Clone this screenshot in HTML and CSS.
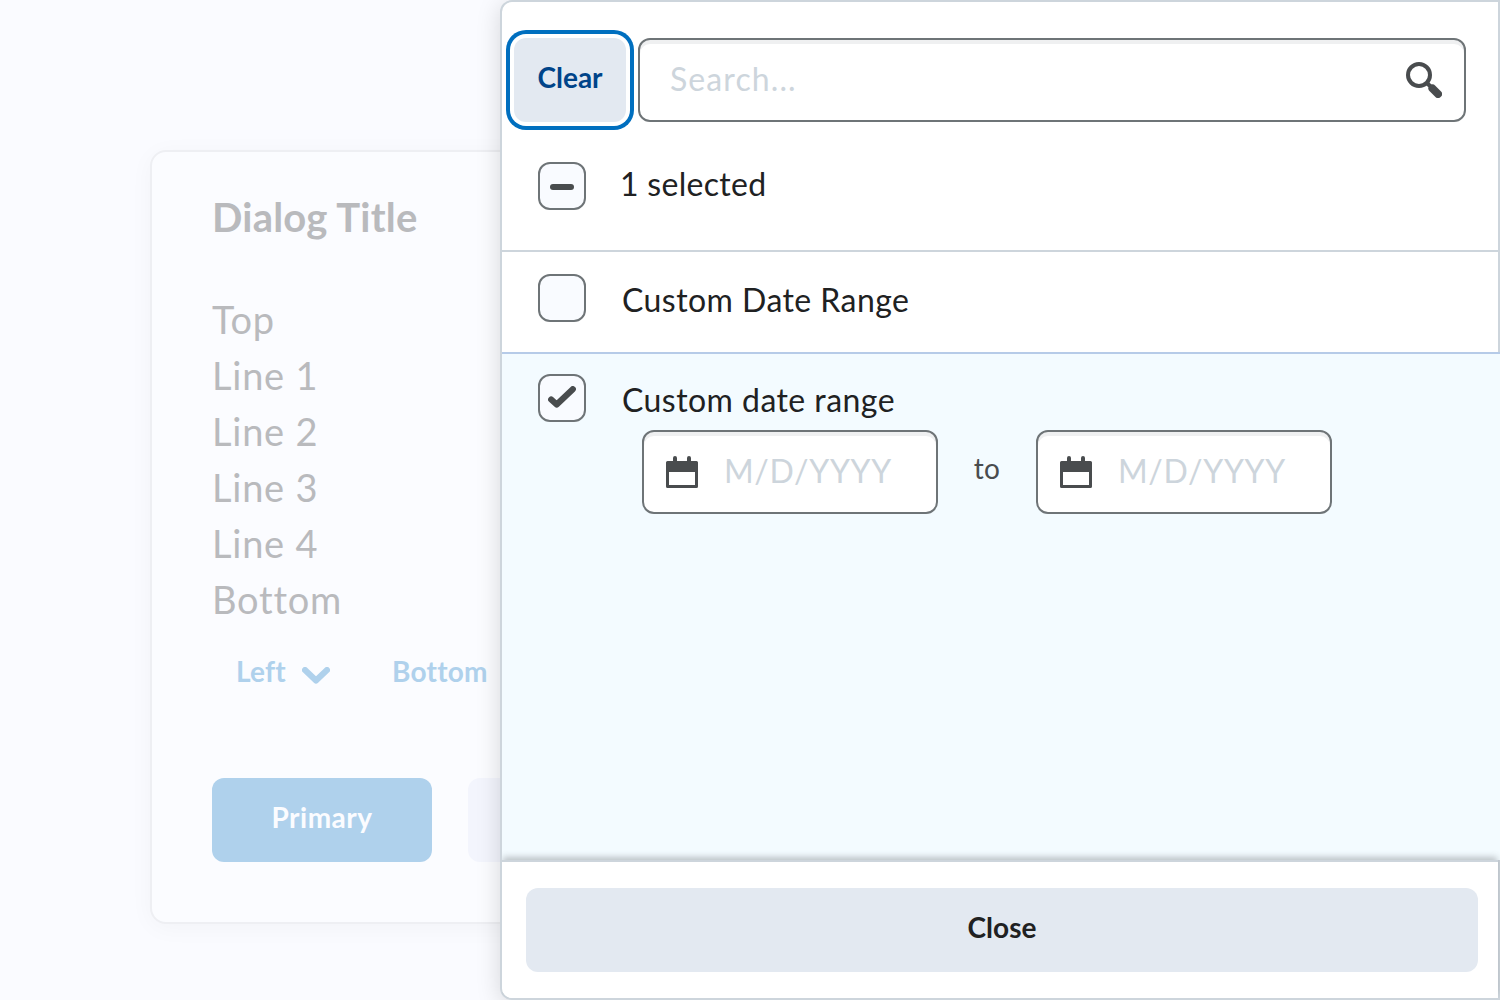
FILE: index.html
```html
<!DOCTYPE html>
<html lang="en">
<head>
<meta charset="utf-8">
<title>Custom date range filter</title>
<link rel="stylesheet" href="styles.css">
</head>
<body>
<section class="dialog">
  <h2 class="dialog-title">Dialog Title</h2>
  <div class="dialog-lines">
    <div>Top</div><div>Line 1</div><div>Line 2</div><div>Line 3</div><div>Line 4</div><div>Bottom</div>
  </div>
  <div class="dialog-links">
    <span class="link">Left
      <svg class="chevron" width="28" height="17" viewBox="0 0 28 17"><path d="M3 3l11 10.500L25 3" fill="none" stroke="#afd1ec" stroke-width="6" stroke-linecap="round" stroke-linejoin="round"/></svg>
    </span>
    <span class="link">Bottom</span>
  </div>
  <div class="dialog-footer">
    <div class="btn-primary">Primary</div>
    <div class="btn-muted"></div>
  </div>
</section>

<aside class="panel">
  <div class="search-row">
    <div class="clear">Clear</div>
    <div class="input search">
      <span class="placeholder">Search...</span>
      <svg width="36" height="36" viewBox="0 0 36 36"><circle cx="13" cy="13" r="11" fill="none" stroke="#494c4e" stroke-width="4"/><path d="M20.500 20.500l4 4" stroke="#494c4e" stroke-width="4"/><path d="M26.500 26.500l5.500 5.500" stroke="#494c4e" stroke-width="8" stroke-linecap="round"/></svg>
    </div>
  </div>
  <div class="select-all">
    <div class="checkbox"><span class="dash"></span></div>
    <span class="label">1 selected</span>
  </div>
  <div class="item">
    <div class="checkbox"></div>
    <span class="label">Custom Date Range</span>
  </div>
  <div class="item-selected">
    <div class="item-head">
      <div class="checkbox"><svg width="28" height="22" viewBox="0 0 28 22"><path d="M3.200 13.500l5.500 5L24.800 3.200" fill="none" stroke="#494c4e" stroke-width="6.200" stroke-linecap="round" stroke-linejoin="round"/></svg></div>
      <span class="label">Custom date range</span>
    </div>
    <div class="dates">
      <div class="input date">
        <svg width="32" height="32" viewBox="0 0 32 32"><path fill="#494c4e" fill-rule="evenodd" d="M1.500 5H7V2a2 2 0 0 1 4 0v3h10V2a2 2 0 0 1 4 0v3h5.500A1.500 1.500 0 0 1 32 6.500v24a1.500 1.500 0 0 1-1.500 1.500h-29A1.500 1.500 0 0 1 0 30.500v-24A1.500 1.500 0 0 1 1.500 5zM3 16v13h26V16z"/></svg>
        <span class="placeholder">M/D/YYYY</span>
      </div>
      <span class="to">to</span>
      <div class="input date">
        <svg width="32" height="32" viewBox="0 0 32 32"><path fill="#494c4e" fill-rule="evenodd" d="M1.500 5H7V2a2 2 0 0 1 4 0v3h10V2a2 2 0 0 1 4 0v3h5.500A1.500 1.500 0 0 1 32 6.500v24a1.500 1.500 0 0 1-1.500 1.500h-29A1.500 1.500 0 0 1 0 30.500v-24A1.500 1.500 0 0 1 1.500 5zM3 16v13h26V16z"/></svg>
        <span class="placeholder">M/D/YYYY</span>
      </div>
    </div>
  </div>
  <div class="footer"><div class="close">Close</div></div>
</aside>
</body>
</html>
```
FILE: styles.css
```css
* { box-sizing: border-box; }
body {
  margin: 0;
  width: 1500px;
  height: 1000px;
  overflow: hidden;
  position: relative;
  padding: 150px 150px 0;
  background: #fafbff;
  font-family: Lato, sans-serif;
  color: #202122;
}
svg { display: block; flex: none; }

.dialog {
  width: 1200px;
  height: 774px;
  padding: 41px 60px 60px;
  border: 2px solid #eeeff3;
  border-radius: 16px;
  background: #fbfcff;
  box-shadow: 0 4px 24px rgba(0, 0, 0, 0.035);
  color: #b9babd;
}
.dialog-title {
  margin: 0;
  font-size: 40px;
  line-height: 48px;
  font-weight: 700;
  letter-spacing: 0.2px;
}
.dialog-lines {
  margin-top: 50px;
  font-size: 38px;
  line-height: 56px;
  letter-spacing: 0.76px;
}
.dialog-links {
  display: flex;
  gap: 62px;
  margin-top: 26px;
  padding-left: 24px;
}
.link {
  display: flex;
  gap: 16px;
  color: #afd1ec;
  font-size: 28px;
  line-height: 36px;
  font-weight: 700;
  letter-spacing: 0.25px;
}
.chevron { margin-top: 14px; }
.dialog-footer {
  display: flex;
  gap: 36px;
  margin-top: 89px;
}
.btn-primary, .btn-muted {
  width: 220px;
  height: 84px;
  border-radius: 12px;
  line-height: 78px;
  text-align: center;
}
.btn-primary {
  background: #afd1ec;
  color: #fbfcff;
  font-size: 28px;
  font-weight: 700;
  letter-spacing: 0.5px;
}
.btn-muted { background: #f3f5fd; }

.panel {
  position: absolute;
  inset: 0 0 0 500px;
  display: flex;
  flex-direction: column;
  border: 2px solid #cdd5dc;
  border-radius: 12px 0 0 12px;
  background: #fff;
  box-shadow: 0 4px 24px rgba(0, 0, 0, 0.15);
}
.search-row {
  display: flex;
  gap: 12px;
  padding: 36px 32px 0 12px;
}
.clear {
  width: 112px;
  height: 84px;
  border-radius: 12px;
  background: #e3e9f1;
  box-shadow: 0 0 0 4px #fff, 0 0 0 8px #006fbf;
  color: #004489;
  font-size: 28px;
  font-weight: 700;
  line-height: 78px;
  text-align: center;
}
.input {
  display: flex;
  align-items: center;
  height: 84px;
  border: 2px solid #6e7477;
  border-radius: 12px;
  background: #fff;
  box-shadow: inset 0 4px 0 #eff0f1;
}
.placeholder {
  padding-bottom: 4px;
  color: #cdd5dc;
  font-size: 32px;
  letter-spacing: 0.64px;
}
.search .placeholder { letter-spacing: 1.1px; }
.search {
  flex: 1;
  justify-content: space-between;
  padding: 0 22px 0 30px;
}
.select-all, .item {
  display: flex;
  padding-left: 36px;
  gap: 36px;
  border-bottom: 2px solid #cdd5dc;
}
.select-all {
  height: 130px;
  padding-top: 40px;
  gap: 34px;
}
.item {
  height: 102px;
  margin-right: -2px;
  padding-top: 22px;
  border-color: #b6cbe8;
  background: linear-gradient(#cdd5dc, #cdd5dc) right / 2px 100% no-repeat;
}
.checkbox {
  display: flex;
  align-items: center;
  justify-content: center;
  flex: none;
  width: 48px;
  height: 48px;
  border: 2px solid #6e7477;
  border-radius: 12px;
  background: #f9fbff;
}
.dash {
  width: 24px;
  height: 6px;
  margin-top: 2px;
  border-radius: 3px;
  background: #494c4e;
}
.label {
  font-size: 32px;
  line-height: 48px;
  letter-spacing: 0.45px;
}
.select-all .label { margin-top: -2px; letter-spacing: 0.3px; }
.item .label, .item-head .label { margin-top: 2px; }
.item-selected {
  flex: 1;
  margin-right: -2px;
  padding: 20px 0 0 36px;
  background: #f3fbff;
}
.item-head { display: flex; gap: 36px; }
.item-head .checkbox svg { margin-top: -2px; }
.dates {
  display: flex;
  align-items: center;
  margin: 6px 0 0 104px;
}
.date {
  width: 296px;
  gap: 26px;
  padding-left: 22px;
}
.to {
  width: 98px;
  padding-bottom: 8px;
  color: #494c4e;
  font-size: 28px;
  letter-spacing: 0.4px;
  text-align: center;
}
.footer {
  position: relative;
  height: 138px;
  padding: 26px 20px 0 24px;
  border-top: 2px solid #cdd5dc;
  border-radius: 0 0 0 10px;
  background: #fff;
  box-shadow: 0 -4px 6px -1px rgba(73, 76, 78, 0.32);
  clip-path: inset(-16px -2px 0 0);
}
.close {
  height: 84px;
  border-radius: 12px;
  background: #e3e9f1;
  font-size: 28px;
  font-weight: 700;
  line-height: 78px;
  text-align: center;
}
```
